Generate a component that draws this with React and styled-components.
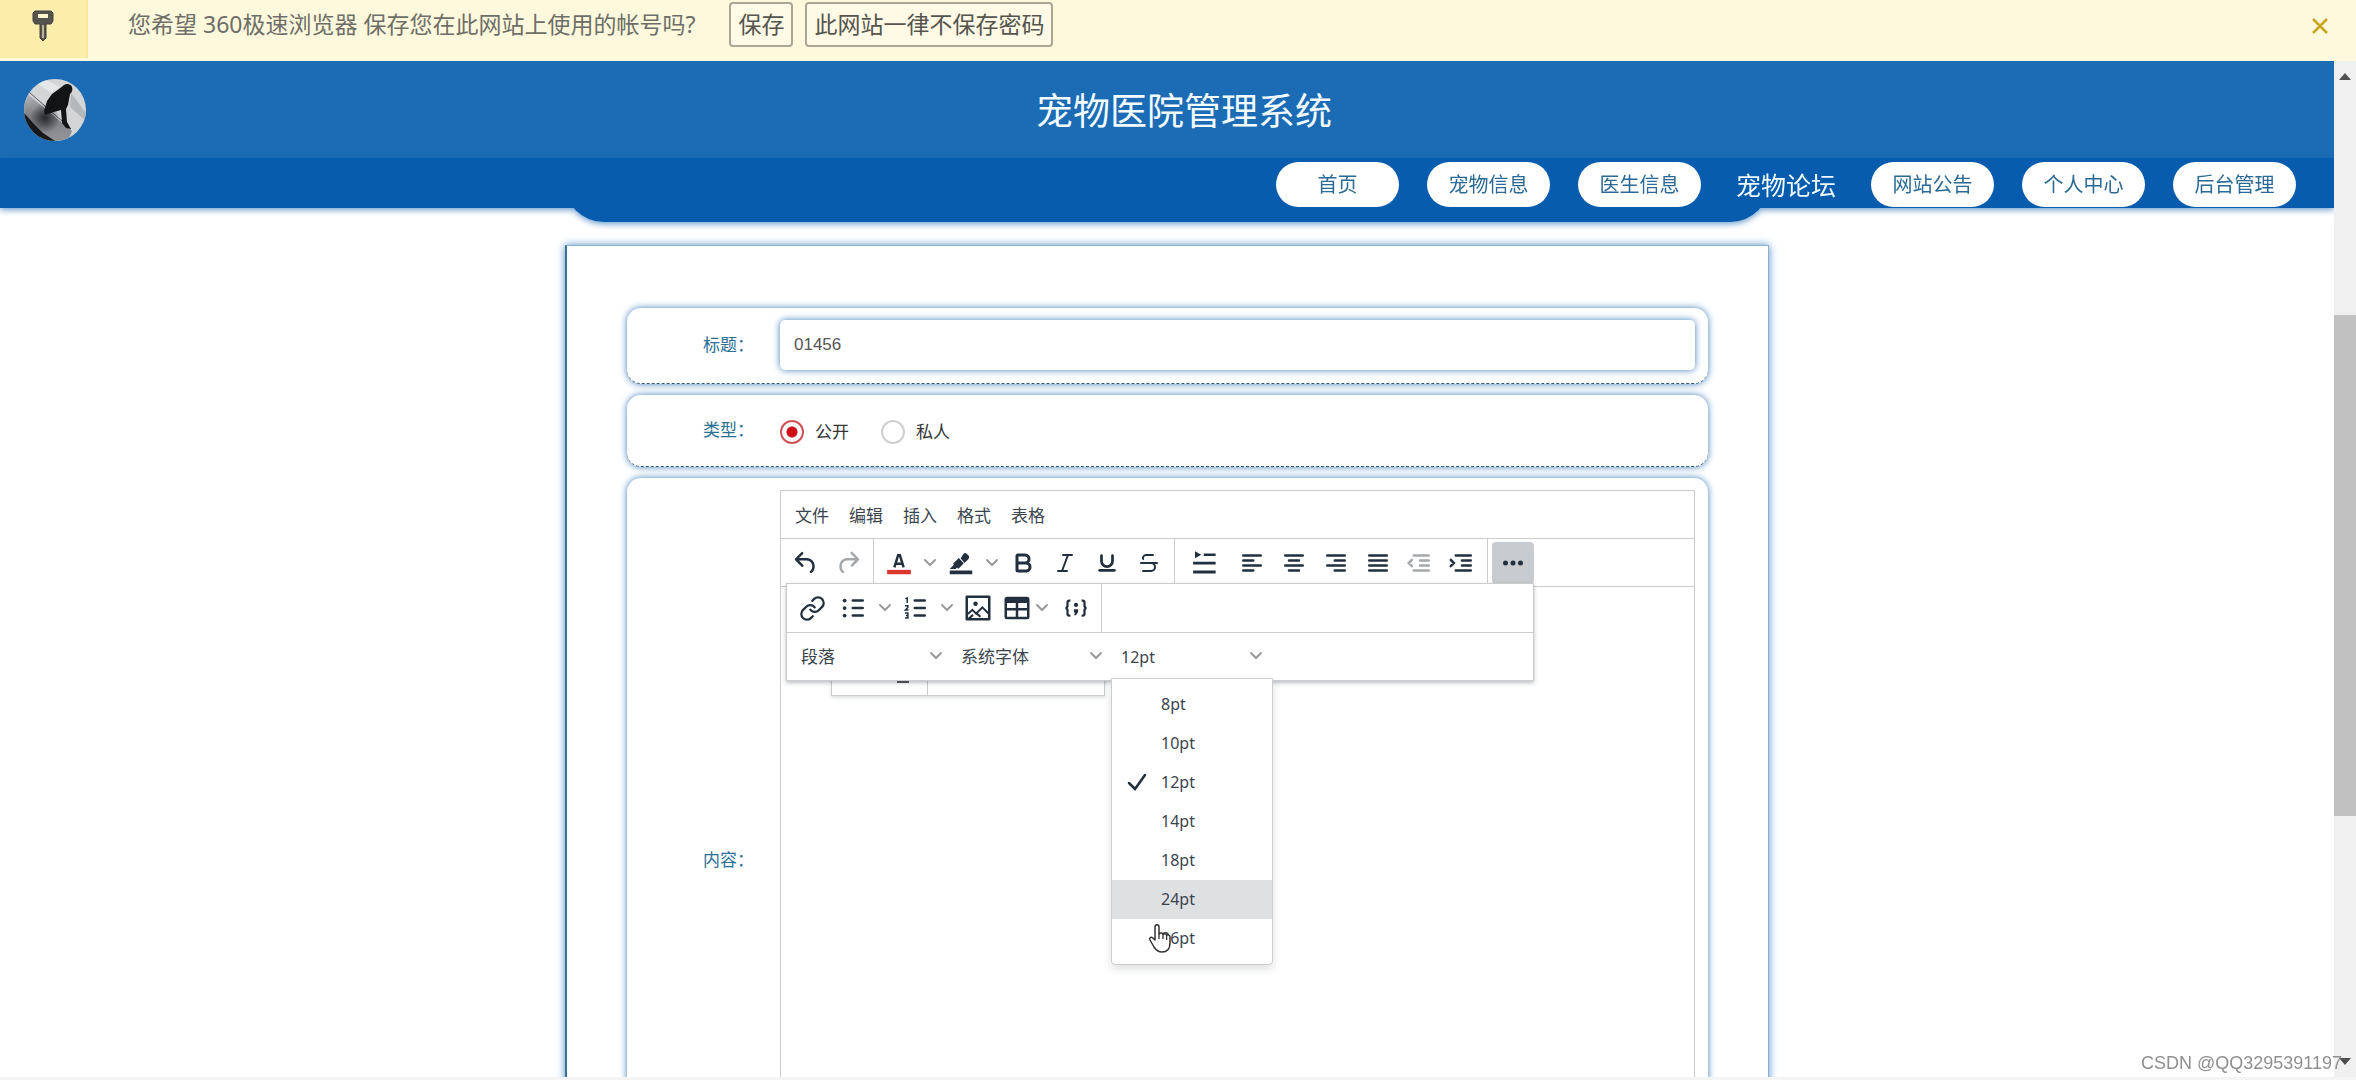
import React, { useState } from 'react'
import styled, { createGlobalStyle, css } from 'styled-components'
import { Bold, Italic, Link, Strikethrough, Underline } from 'lucide-react'

const GlobalStyle = createGlobalStyle`
  * {
    box-sizing: border-box;
  }

  body {
    margin: 0;
    background: #fff;
    font-family: 'Noto Sans', 'Noto Sans CJK SC', sans-serif;
  }

  button,
  input,
  select {
    font-family: inherit;
  }
`

const Screen = styled.div`
  display: flex;
  flex-direction: column;
  height: 100vh;
  overflow: hidden;
`

/* password prompt of the browser */

const InfoBar = styled.div`
  display: flex;
  align-items: flex-start;
  flex: none;
  height: 61px;
  background: #fef9dc;
`

const KeyCell = styled.div`
  display: flex;
  justify-content: center;
  width: 88px;
  height: 58px;
  padding-top: 10px;
  background: #fbeeaa;
  border-right: 2px solid #f8e8a0;
`

const InfoText = styled.p`
  margin: 2px 34px 0 40px;
  color: #6e6e68;
  font-size: 23px;
  line-height: 45px;
`

const InfoButton = styled.button`
  height: 45px;
  margin: 2px 12px 0 0;
  padding: 0 7px;
  border: 2px solid #aaa696;
  border-radius: 4px;
  background: #fefae6;
  color: #55554e;
  font-size: 23px;
  line-height: 41px;
`

const CloseButton = styled.button`
  display: flex;
  margin: 14px 24px 0 auto;
  padding: 0;
  border: 0;
  background: none;
`

/* page pane and its scrollbar */

const Pane = styled.div`
  display: flex;
  flex: 1;
  min-height: 0;
  border-bottom: 3px solid #f4f4f4;
`

const Page = styled.div`
  flex: 1;
  overflow: hidden;
`

const Scrollbar = styled.div`
  display: grid;
  grid-template-rows: 30px 224fr 502fr 231fr 30px;
  width: 22px;
  background: #f0f0f0;
`

const ScrollArrow = styled.svg`
  align-self: center;
  justify-self: center;
`

const Thumb = styled.div`
  grid-row: 3;
  background: #c1c1c1;
`

const Header = styled.header`
  display: flex;
  align-items: center;
  height: 97px;
  padding: 0 52px 0 24px;
  background: #1c6cb5;
`

const Title = styled.h1`
  flex: 1;
  margin: 0;
  padding-top: 2px;
  color: #f2fbff;
  font-size: 37px;
  font-weight: 400;
  line-height: 56px;
  text-align: center;
`

const NavArea = styled.div`
  filter: drop-shadow(0 2px 3px rgba(8, 92, 173, 0.6));
`

const Nav = styled.nav`
  position: relative;
  z-index: 1;
  display: flex;
  align-items: center;
  justify-content: flex-end;
  gap: 28px;
  height: 50px;
  padding: 3px 38px 0 0;
  background: #085cad;
`

const NavLink = styled.a`
  width: 123px;
  border-radius: 23px;
  background: #fff;
  color: #2b6a94;
  font-size: 20px;
  line-height: 45px;
  text-align: center;
  text-decoration: none;

  ${(props) =>
    props.$active &&
    css`
      width: 114px;
      background: none;
      color: #eefaff;
      font-size: 25px;
      line-height: 42px;
    `}
`

const NavTail = styled.div`
  max-width: 1206px;
  height: 44px;
  margin: -30px auto 0;
  border-radius: 0 0 40px 40px;
  background: #085cad;
`

/* form */

const Card = styled.main`
  max-width: 1204px;
  margin: 23px auto 0;
  padding: 62px 60px;
  border: 1px solid #8fb0cc;
  border-left: 2px solid #3a7296;
  background: #fff;
  box-shadow: 0 0 8px #4c8ecb;
`

const Row = styled.div`
  display: flex;
  align-items: center;
  gap: 26px;
  margin-bottom: 11px;
  padding: 12px 13px 13px 0;
  border-bottom: 1px dashed #2f5878;
  border-radius: 14px;
  box-shadow: 0 0 7px #3f7fba;
`

const RowLabel = styled.label`
  flex: none;
  width: 127px;
  color: #2b6f94;
  font-size: 17px;
  line-height: 24px;
  text-align: right;
`

const TextInput = styled.input`
  flex: 1;
  height: 50px;
  padding: 0 14px;
  border: 0;
  border-radius: 5px;
  outline: 0;
  box-shadow: 0 0 7px #3f7fba;
  color: #555;
  font-family: 'Liberation Sans', Arial, sans-serif;
  font-size: 17px;
`

const RadioList = styled.div`
  display: flex;
  align-items: center;
  gap: 32px;
  height: 46px;
  padding-top: 3px;
`

const RadioLabel = styled.label`
  display: flex;
  align-items: center;
  gap: 11px;
  color: #333;
  font-size: 17px;
  line-height: 24px;
`

const Radio = styled.input`
  appearance: none;
  width: 24px;
  height: 24px;
  margin: 0;
  border: 2px solid #cfcfcf;
  border-radius: 50%;

  &:checked {
    border-color: #cf5258;
    background: radial-gradient(circle, #cc1016 5px, transparent 6px);
  }
`

/* rich text editor */

const Editor = styled.div`
  flex: 1;
  height: 740px;
  border: 1px solid #ccc;
`

const MenuBar = styled.div`
  display: flex;
  align-items: center;
  height: 48px;
  padding: 2px 4px 0;
  border-bottom: 1px solid #ccc;
`

const MenuButton = styled.button`
  padding: 0 10px;
  border: 0;
  background: none;
  color: #3a444f;
  font-size: 17px;
  line-height: 40px;
`

const Toolbar = styled.div`
  position: relative;
  display: flex;
  height: 48px;
  border-bottom: 1px solid #ccc;
`

const Group = styled.div`
  display: flex;
  align-items: center;
  padding: 0 4px;
  border-right: ${(props) => (props.$last ? '0' : '1px solid #ccc')};
`

const ToolButton = styled.button`
  display: flex;
  align-items: center;
  justify-content: center;
  width: ${(props) => (props.$wide ? '52px' : '42px')};
  height: 42px;
  padding: 0;
  border: 0;
  border-radius: 4px;
  background: ${(props) => (props.$pressed ? '#c8cbcf' : 'none')};
  color: ${(props) => (props.disabled ? '#a5a8ab' : '#222f3e')};
`

const ArrowButton = styled(ToolButton)`
  width: 20px;
  color: #999;
`

const TableButton = styled(ToolButton)`
  width: 56px;
`

const ChevronBox = styled.span`
  display: flex;
  justify-content: center;
  width: 20px;
  color: #999;
`

const Drawer = styled.div`
  position: absolute;
  z-index: 2;
  top: 44px;
  left: 5px;
  width: 748px;
  border: 1px solid #ccc;
  background: #fff;
  box-shadow: 0 2px 4px rgba(34, 47, 62, 0.3);
`

const DrawerRow = styled.div`
  display: flex;
  height: 48px;

  & + & {
    border-top: 1px solid #ccc;
  }
`

const StaleDrawer = styled.div`
  position: absolute;
  z-index: 1;
  top: 120px;
  left: 50px;
  display: flex;
  width: 274px;
  height: 37px;
  border: 1px solid #ccc;
  background: #fff;
  box-shadow: 0 2px 3px rgba(34, 47, 62, 0.15);
`

const StaleCell = styled.div`
  display: flex;
  align-items: center;
  justify-content: center;
  width: 96px;
  padding: 8px 0 0 46px;
  border-right: 1px solid #ccc;
`

const Dash = styled.span`
  width: 12px;
  height: 2px;
  background: #555;
`

const Picker = styled.div`
  position: relative;
  display: flex;
  align-items: center;
  width: 160px;
`

const PickerSelect = styled.select`
  appearance: none;
  width: 100%;
  height: 42px;
  padding: 0 30px 0 10px;
  border: 0;
  background: none;
  color: #3a444f;
  font-size: ${(props) => (props.$latin ? '16px' : '17px')};
`

const PickerArrow = styled.span`
  position: absolute;
  right: 5px;
  display: flex;
  justify-content: center;
  width: 20px;
  padding-bottom: 2px;
  color: #999;
  pointer-events: none;
`

const Options = styled.ul`
  position: absolute;
  z-index: 3;
  top: 42px;
  left: 0;
  width: 162px;
  margin: 0;
  padding: 6px 0;
  border: 1px solid #ccc;
  border-radius: 0 0 4px 4px;
  background: #fff;
  box-shadow: 0 4px 8px rgba(34, 47, 62, 0.15);
  list-style: none;
`

const Option = styled.li`
  display: grid;
  grid-template-columns: 28px 1fr;
  align-items: center;
  height: 39px;
  padding-left: 11px;
  gap: 10px;
  background: ${(props) => (props.$hover ? '#dee0e2' : 'none')};
  color: #3a444f;
  font-size: 16px;
`

const OptionText = styled.span`
  grid-column: 2;
`

const Tick = styled.svg`
  grid-row: 1;
  justify-self: center;
`

const Pointer = styled.svg`
  position: absolute;
  right: 100px;
  bottom: 10px;
`

const Watermark = styled.div`
  position: fixed;
  right: 14px;
  bottom: 5px;
  color: #8f8f8f;
  font-family: 'Liberation Sans', Arial, sans-serif;
  font-size: 18px;
  line-height: 24px;
`

const Icon = ({ children }) => (
  <svg width="30" height="30" viewBox="0 0 24 24" fill="currentColor" aria-hidden="true">
    {children}
  </svg>
)

const Lines = ({ d }) => (
  <Icon>
    <path d={d} fill="none" stroke="currentColor" strokeWidth="2" strokeLinecap="round" />
  </Icon>
)

const Chevron = () => (
  <svg width="14" height="10" viewBox="0 0 14 10" aria-hidden="true">
    <path d="M2 2l5 5 5-5" fill="none" stroke="currentColor" strokeWidth="2" strokeLinecap="round" />
  </svg>
)

const KeyIcon = () => (
  <svg width="22" height="34" viewBox="0 0 22 34" aria-hidden="true">
    <path d="M3 1h16l2 2v8l-2 3h-5v14l-3 3-3-3V14H3l-2-3V3z" fill="#55534c" stroke="#44423c" />
    <path d="M6 4h10v4H6z" fill="#fdf6cf" />
    <path d="M11 15v13" stroke="#b9b49a" strokeWidth="2" />
  </svg>
)

const Avatar = () => (
  <svg width="62" height="62" viewBox="0 0 62 62" role="img" aria-label="logo">
    <defs>
      <clipPath id="round">
        <circle cx="31" cy="31" r="31" />
      </clipPath>
      <linearGradient id="ground" x1="0.2" y1="0" x2="0.4" y2="1">
        <stop offset="0" stopColor="#b9bcc0" />
        <stop offset="0.5" stopColor="#77797c" />
        <stop offset="1" stopColor="#909295" />
      </linearGradient>
      <radialGradient id="shade">
        <stop offset="0" stopColor="#26282b" />
        <stop offset="1" stopColor="#26282b" stopOpacity="0" />
      </radialGradient>
    </defs>
    <g clipPath="url(#round)">
      <path d="M0 0h62v62H0z" fill="#d3d5d7" />
      <path d="M20 0l16 8-9 6L14 5z" fill="#e6e7e8" />
      <path d="M47 14l15 20v8L46 28z" fill="#b5b8bb" />
      <path d="M0 12l48 40-4 10H0z" fill="url(#ground)" />
      <path d="M5 13l42 37" stroke="#55585b" strokeWidth="1" />
      <circle cx="21" cy="39" r="15" fill="url(#shade)" />
      <path d="M0 34l10 11 9 9 12 8H0z" fill="#17181a" />
      <path
        d="M40 6c3-2 7-1 8 2 1 3 0 5-2 7l-2 11-2 4 1 13 4 7-5-1-4-5-1-13-7 2-9 3-1-4 3-10 5-7 7-5z"
        fill="#131416"
      />
    </g>
  </svg>
)

const UndoIcon = () => (
  <Icon>
    <path d="M6.4 8H12c3.7 0 6.2 2 6.8 5.1.6 2.7-.4 5.6-2.3 6.8a1 1 0 01-1-1.8c1.1-.6 1.8-2.7 1.4-4.6-.5-2.1-2.1-3.5-4.9-3.5H6.4l3.3 3.3a1 1 0 11-1.4 1.4l-5-5a1 1 0 010-1.4l5-5a1 1 0 011.4 1.4L6.4 8z" />
  </Icon>
)

const RedoIcon = () => (
  <Icon>
    <path d="M17.6 10H12c-2.8 0-4.4 1.4-4.9 3.5-.4 2 .3 4 1.4 4.6a1 1 0 11-1 1.8c-2-1.2-2.9-4.1-2.3-6.8.6-3 3-5.1 6.8-5.1h5.6l-3.3-3.3a1 1 0 111.4-1.4l5 5a1 1 0 010 1.4l-5 5a1 1 0 01-1.4-1.4l3.3-3.3z" />
  </Icon>
)

const ColorIcon = () => (
  <Icon>
    <path d="M2.500 17.500h19v3.500h-19z" fill="#d9372c" />
    <path d="M8.300 15.500L11.300 5.800h1.400l3 9.700M9.400 12.600h5.200" fill="none" stroke="currentColor" strokeWidth="2" />
  </Icon>
)

const MarkerIcon = () => (
  <Icon>
    <path d="M3 18h18v3H3z" />
    <path d="M7.700 16.700H3l3.300-3.300-.7-.8L10.200 8l4 4.100-4 4.200c-.2.2-.6.2-.8 0l-.6-.7-1.100 1.100zm4-8.500L14 4.500a2 2 0 012.600 0L18 6c.7.7.7 2 0 2.700l-3.200 3.200z" />
  </Icon>
)

const LineHeightIcon = () => (
  <Icon>
    <path d="M4 2.500l5 2.800-5 2.800zM11 4.300h9.500v2H11zM2.500 11h18v2.200h-18zM2.500 18h18v2.400h-18z" />
  </Icon>
)

const OutdentIcon = () => (
  <Lines d="M7 6h12M12 10h7M12 14h7M7 18h12M5.500 9.500L3 12l2.500 2.500" />
)

const IndentIcon = () => (
  <Lines d="M7 6h12M12 10h7M12 14h7M7 18h12M3 9.500L5.500 12 3 14.500" />
)

const MoreIcon = () => (
  <Icon>
    <circle cx="6" cy="12" r="2" />
    <circle cx="12" cy="12" r="2" />
    <circle cx="18" cy="12" r="2" />
  </Icon>
)

const BulletIcon = () => (
  <Icon>
    <path d="M11 5h8a1 1 0 010 2h-8a1 1 0 010-2zm0 6h8a1 1 0 010 2h-8a1 1 0 010-2zm0 6h8a1 1 0 010 2h-8a1 1 0 010-2z" />
    <circle cx="4.500" cy="6" r="1.500" />
    <circle cx="4.500" cy="12" r="1.500" />
    <circle cx="4.500" cy="18" r="1.500" />
  </Icon>
)

const NumberIcon = () => (
  <Icon>
    <path d="M11 5h8a1 1 0 010 2h-8a1 1 0 010-2zm0 6h8a1 1 0 010 2h-8a1 1 0 010-2zm0 6h8a1 1 0 010 2h-8a1 1 0 010-2z" />
    <path
      d="M3.500 4.500L5 4v4M3.200 10.200h2.300v1.400l-2 2H6M3.200 16h2.300v4H3.200M4 18h1.500"
      fill="none"
      stroke="currentColor"
      strokeWidth="1.200"
    />
  </Icon>
)

const ImageIcon = () => (
  <Icon>
    <path
      d="M3 3h18v18H3z"
      fill="none"
      stroke="currentColor"
      strokeWidth="2"
      strokeLinejoin="round"
    />
    <path
      d="M3 17.500l4.500-4 3 3 5-5 5.500 5.500M4 21l4-3.500M11 16.500l3 2.500"
      fill="none"
      stroke="currentColor"
      strokeWidth="1.600"
    />
    <circle cx="10" cy="8.500" r="1.800" />
  </Icon>
)

const TableIcon = () => (
  <Icon>
    <path
      fillRule="evenodd"
      d="M4 3h16a2 2 0 012 2v14a2 2 0 01-2 2H4a2 2 0 01-2-2V5c0-1.100.900-2 2-2zm0 5v4h7V8zm9 0v4h7V8zm-9 6v5h7v-5zm9 0v5h7v-5z"
    />
  </Icon>
)

const CodeIcon = () => (
  <Icon>
    <path
      d="M7.500 6H6.600Q5.200 6 5.200 7.500v2.500Q5.200 12 3.500 12q1.700 0 1.700 2v2.500Q5.200 18 6.600 18h.9M16.500 6h.9q1.400 0 1.400 1.500v2.500q0 2 1.700 2-1.700 0-1.700 2v2.500q0 1.500-1.400 1.500h-.9"
      fill="none"
      stroke="currentColor"
      strokeWidth="1.800"
    />
    <circle cx="12" cy="9.500" r="1.700" />
    <path d="M10.300 13h3.400v2.200L12 17.700h-1.500l.7-2.200h-.9z" />
  </Icon>
)

const links = ['首页', '宠物信息', '医生信息', '宠物论坛', '网站公告', '个人中心', '后台管理']
const menus = ['文件', '编辑', '插入', '格式', '表格']
const sizes = ['8pt', '10pt', '12pt', '14pt', '18pt', '24pt', '36pt']

const SplitButton = ({ label, children }) => (
  <>
    <ToolButton type="button" aria-label={label}>{children}</ToolButton>
    <ArrowButton type="button" aria-label={`${label} menu`}><Chevron /></ArrowButton>
  </>
)

const SizePicker = () => {
  const [size, setSize] = useState('12pt')

  return (
    <Picker>
      <PickerSelect $latin aria-label="字号" value={size} onChange={(e) => setSize(e.target.value)}>
        {sizes.map((s) => <option key={s}>{s}</option>)}
      </PickerSelect>
      <PickerArrow><Chevron /></PickerArrow>
      <Options role="listbox" aria-label="字号">
        {sizes.map((s) => (
          <Option key={s} role="option" aria-selected={s === size} $hover={s === '24pt'} onClick={() => setSize(s)}>
            {s === size && (
              <Tick width="22" height="20" viewBox="0 0 22 20" aria-hidden="true">
                <path d="M3 11l6 6L19 3" fill="none" stroke="#222f3e" strokeWidth="2.500" strokeLinecap="round" />
              </Tick>
            )}
            <OptionText>{s}</OptionText>
          </Option>
        ))}
        <Pointer width="24" height="31" viewBox="0 0 24 31" aria-hidden="true">
          <path
            d="M7 17V4c0-3 4-3 4 0v7c1-1.500 3.500-1.500 4 .5 1-1.200 3.200-.8 3.600.8 1.400-1 3.400-.2 3.400 1.700v6c0 6-3 9-8 9-4 0-6-2-8-5l-4-7c-1-2 1-3.500 2.500-2.300z"
            fill="#fff"
            stroke="#333"
            strokeWidth="1.500"
            strokeLinejoin="round"
          />
          <path d="M11 11v5M15 12v4M18.600 13v4" stroke="#333" strokeWidth="1.300" />
        </Pointer>
      </Options>
    </Picker>
  )
}

const EditorDrawer = () => (
  <Drawer>
    <DrawerRow>
      <Group>
        <ToolButton type="button" aria-label="link"><Link size={27} strokeWidth={2} /></ToolButton>
        <SplitButton label="bullet list"><BulletIcon /></SplitButton>
        <SplitButton label="numbered list"><NumberIcon /></SplitButton>
        <ToolButton type="button" aria-label="image"><ImageIcon /></ToolButton>
        <TableButton type="button" aria-label="table">
          <TableIcon />
          <ChevronBox><Chevron /></ChevronBox>
        </TableButton>
        <ToolButton type="button" aria-label="code sample"><CodeIcon /></ToolButton>
      </Group>
    </DrawerRow>
    <DrawerRow>
      <Group $last>
        <Picker>
          <PickerSelect aria-label="段落"><option>段落</option></PickerSelect>
          <PickerArrow><Chevron /></PickerArrow>
        </Picker>
        <Picker>
          <PickerSelect aria-label="字体"><option>系统字体</option></PickerSelect>
          <PickerArrow><Chevron /></PickerArrow>
        </Picker>
        <SizePicker />
      </Group>
    </DrawerRow>
  </Drawer>
)

const RichText = () => (
  <Editor id="content">
    <MenuBar>
      {menus.map((m) => <MenuButton key={m} type="button">{m}</MenuButton>)}
    </MenuBar>
    <Toolbar>
      <Group>
        <ToolButton type="button" aria-label="undo"><UndoIcon /></ToolButton>
        <ToolButton type="button" aria-label="redo" disabled><RedoIcon /></ToolButton>
      </Group>
      <Group>
        <SplitButton label="text color"><ColorIcon /></SplitButton>
        <SplitButton label="highlight"><MarkerIcon /></SplitButton>
        <ToolButton type="button" aria-label="bold"><Bold size={24} strokeWidth={3} /></ToolButton>
        <ToolButton type="button" aria-label="italic"><Italic size={24} strokeWidth={2} /></ToolButton>
        <ToolButton type="button" aria-label="underline"><Underline size={22} strokeWidth={3} /></ToolButton>
        <ToolButton type="button" aria-label="strikethrough"><Strikethrough size={24} strokeWidth={2} /></ToolButton>
      </Group>
      <Group>
        <ToolButton type="button" aria-label="line height" $wide><LineHeightIcon /></ToolButton>
        <ToolButton type="button" aria-label="align left"><Lines d="M5 6h14M5 10h8M5 14h14M5 18h8" /></ToolButton>
        <ToolButton type="button" aria-label="align center"><Lines d="M5 6h14M8 10h8M5 14h14M8 18h8" /></ToolButton>
        <ToolButton type="button" aria-label="align right"><Lines d="M5 6h14M11 10h8M5 14h14M11 18h8" /></ToolButton>
        <ToolButton type="button" aria-label="justify"><Lines d="M5 6h14M5 10h14M5 14h14M5 18h14" /></ToolButton>
        <ToolButton type="button" aria-label="outdent" disabled><OutdentIcon /></ToolButton>
        <ToolButton type="button" aria-label="indent"><IndentIcon /></ToolButton>
      </Group>
      <Group $last>
        <ToolButton type="button" aria-label="more" $pressed><MoreIcon /></ToolButton>
      </Group>
      <StaleDrawer>
        <StaleCell><Dash /></StaleCell>
      </StaleDrawer>
      <EditorDrawer />
    </Toolbar>
  </Editor>
)

const App = () => {
  const [title, setTitle] = useState('01456')
  const [type, setType] = useState('公开')

  return (
    <Screen>
      <GlobalStyle />
      <InfoBar>
        <KeyCell><KeyIcon /></KeyCell>
        <InfoText>您希望 360极速浏览器 保存您在此网站上使用的帐号吗?</InfoText>
        <InfoButton type="button">保存</InfoButton>
        <InfoButton type="button">此网站一律不保存密码</InfoButton>
        <CloseButton type="button" aria-label="close">
          <svg width="24" height="24" viewBox="0 0 24 24" aria-hidden="true">
            <path d="M5 5l14 14M19 5L5 19" stroke="#c8a51c" strokeWidth="2.500" />
          </svg>
        </CloseButton>
      </InfoBar>
      <Pane>
        <Page>
          <Header>
            <Avatar />
            <Title>宠物医院管理系统</Title>
          </Header>
          <NavArea>
            <Nav>
              {links.map((l) => (
                <NavLink key={l} href="#" $active={l === '宠物论坛'}>{l}</NavLink>
              ))}
            </Nav>
            <NavTail />
          </NavArea>
          <Card>
            <Row>
              <RowLabel htmlFor="title">标题：</RowLabel>
              <TextInput id="title" value={title} onChange={(e) => setTitle(e.target.value)} />
            </Row>
            <Row>
              <RowLabel as="span">类型：</RowLabel>
              <RadioList>
                {['公开', '私人'].map((t) => (
                  <RadioLabel key={t}>
                    <Radio type="radio" name="type" checked={type === t} onChange={() => setType(t)} />
                    {t}
                  </RadioLabel>
                ))}
              </RadioList>
            </Row>
            <Row>
              <RowLabel as="span">内容：</RowLabel>
              <RichText />
            </Row>
          </Card>
        </Page>
        <Scrollbar>
          <ScrollArrow width="12" height="7" viewBox="0 0 12 7" aria-hidden="true">
            <path d="M0 7l6-7 6 7z" fill="#505050" />
          </ScrollArrow>
          <Thumb />
          <ScrollArrow width="12" height="7" viewBox="0 0 12 7" style={{ gridRow: 5 }} aria-hidden="true">
            <path d="M0 0l6 7 6-7z" fill="#505050" />
          </ScrollArrow>
        </Scrollbar>
      </Pane>
      <Watermark>CSDN @QQ3295391197</Watermark>
    </Screen>
  )
}

export default App
